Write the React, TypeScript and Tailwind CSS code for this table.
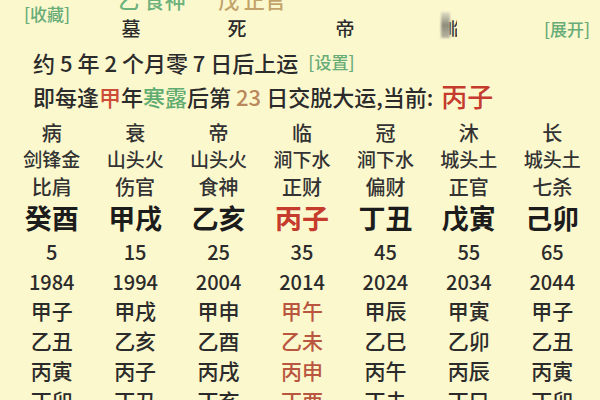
const FONT = { fontFamily: '"Noto Sans CJK SC", "Noto Sans", sans-serif' };

const stages = ['病', '衰', '帝', '临', '冠', '沐', '长'];
const nayin = ['剑锋金', '山头火', '山头火', '涧下水', '涧下水', '城头土', '城头土'];
const gods = ['比肩', '伤官', '食神', '正财', '偏财', '正官', '七杀'];
const pillars = ['癸酉', '甲戌', '乙亥', '丙子', '丁丑', '戊寅', '己卯'];
const ages = ['5', '15', '25', '35', '45', '55', '65'];
const years = ['1984', '1994', '2004', '2014', '2024', '2034', '2044'];
const flow = [
  ['甲子', '甲戌', '甲申', '甲午', '甲辰', '甲寅', '甲子'],
  ['乙丑', '乙亥', '乙酉', '乙未', '乙巳', '乙卯', '乙丑'],
  ['丙寅', '丙子', '丙戌', '丙申', '丙午', '丙辰', '丙寅'],
  ['丁卯', '丁丑', '丁亥', '丁酉', '丁未', '丁巳', '丁卯'],
];

function Row({ items, className, hot }: { items: string[]; className: string; hot?: string }) {
  return (
    <div className={`grid grid-cols-7 items-center ${className}`}>
      {items.map((t, i) => (
        <div key={i} className={`text-center ${i === 3 && hot ? hot : ''}`}>
          {t}
        </div>
      ))}
    </div>
  );
}

export default function App() {
  return (
    <div className="w-[600px] h-[400px] overflow-hidden bg-[#fcf8ce] text-[#2b2b2b] font-medium" style={FONT}>
      {/* header strip */}
      <div className="flex h-[44px]">
        <div className="w-[77px] pl-[24px] pt-[3px] text-[17px] leading-[22px] text-[#68ac78]">[收藏]</div>
        <div className="grid grid-cols-4 w-[432px]">
          <div className="flex flex-col items-center">
            <div className="h-[18px] -translate-y-[10px] ml-[42px] text-[21px] leading-[18px] text-[#6cb27c] whitespace-nowrap">乙 食神</div>
            <div className="text-[19px] leading-[20px]">墓</div>
          </div>
          <div className="flex flex-col items-center">
            <div className="h-[18px] -translate-y-[10px] ml-[26px] text-[21px] leading-[18px] text-[#c2a46a] whitespace-nowrap">戊 正官</div>
            <div className="text-[19px] leading-[20px] -ml-[4px]">死</div>
          </div>
          <div className="flex flex-col items-center">
            <div className="h-[18px]" />
            <div className="text-[19px] leading-[20px] -ml-[4px]">帝</div>
          </div>
          <div className="flex flex-col items-center pr-[12px]">
            <div className="h-[12px]" />
            <div className="flex items-end h-[26px]">
              <div className="w-[9px] h-[26px] bg-gradient-to-b from-[#e4e1c8] via-[#8e8b7c] to-[#b9b6a2] blur-[1px]" />
              <div className="text-[17px] leading-[20px] text-[#3a3a3a] -ml-[2px] w-[9px] overflow-hidden">临</div>
            </div>
          </div>
        </div>
        <div className="flex-1 flex justify-end pr-[10px] pt-[18px] text-[17px] leading-[22px] text-[#68ac78]">[展开]</div>
      </div>

      {/* start line */}
      <div className="flex items-center h-[36px] pl-[33px] text-[22px] leading-[36px] whitespace-nowrap">
        <span>约 5 年 2 个月零 7 日后上运</span>
        <span className="ml-[10px] text-[17px] text-[#68ac78]">[设置]</span>
      </div>
      <div className="flex items-center h-[32px] pl-[33px] text-[22px] leading-[32px] whitespace-nowrap">
        <span>即每逢</span>
        <span className="text-[#cc4c36]">甲</span>
        <span>年</span>
        <span className="text-[#5fab70]">寒露</span>
        <span>后第</span>
        <span className="text-[#bb885c] mx-[5px]">23</span>
        <span>日交脱大运,当前: </span>
        <span className="ml-[8px] text-[26px] text-[#c53b2e]">丙子</span>
      </div>

      {/* table */}
      <div className="ml-[10px] w-[584px] pt-[8px]">
        <Row items={stages} className="h-[26px] text-[20px] leading-[26px] text-[#333]" />
        <Row items={nayin} className="h-[26px] text-[19px] leading-[26px] text-[#333]" />
        <Row items={gods} className="h-[30px] text-[20px] leading-[28px] text-[#333]" />
        <Row items={pillars} className="h-[34px] pb-[2px] text-[27px] leading-[32px] font-bold text-[#1c1c1c]" hot="text-[#c53b2e]" />
        <Row items={ages} className="h-[32px] text-[20px] leading-[28px]" />
        <Row items={years} className="h-[27px] text-[20px] leading-[27px]" />
        {flow.map((r, i) => (
          <Row key={i} items={r} className="h-[30px] text-[21px] leading-[30px]" hot="text-[#b9563f]" />
        ))}
      </div>
    </div>
  );
}
